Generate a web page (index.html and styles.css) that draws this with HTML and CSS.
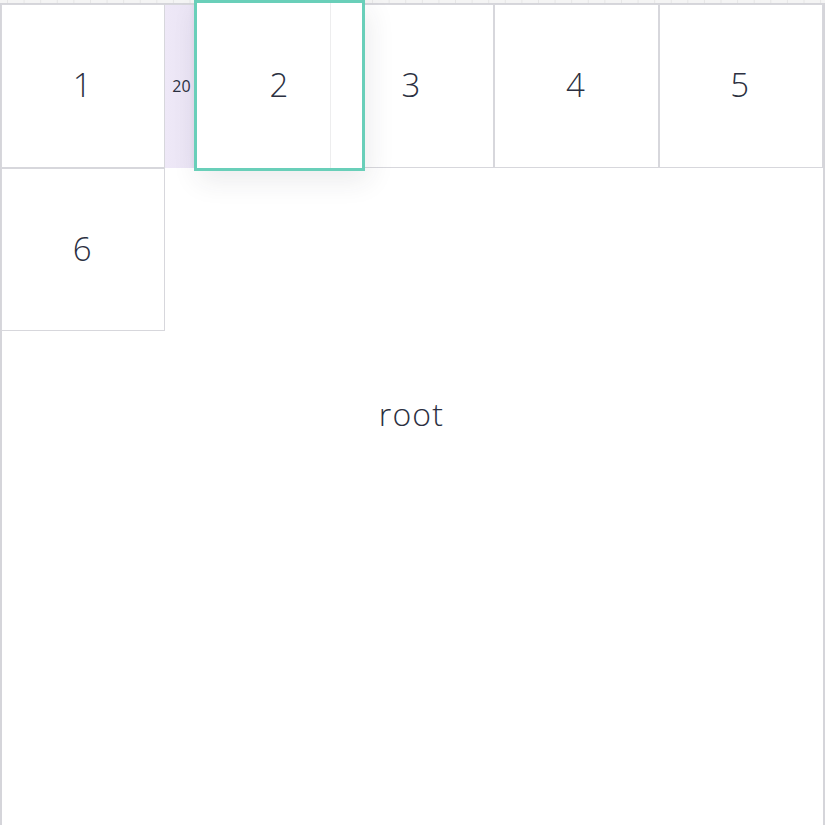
FILE: index.html
```html
<!DOCTYPE html>
<html lang="en">
<head>
<meta charset="utf-8">
<title>Flex layout</title>
<link rel="stylesheet" href="styles.css">
</head>
<body>
<div class="ruler"></div>
<div class="root">
  <div class="root-label">root</div>
  <div class="items">
    <div class="item"><span>1</span></div>
    <div class="item slot">
      <div class="gap"><span>20</span></div>
      <div class="slot-rest"></div>
      <div class="selected">
        <span>2</span>
        <i class="ghost-line"></i>
      </div>
    </div>
    <div class="item"><span>3</span></div>
    <div class="item"><span>4</span></div>
    <div class="item"><span>5</span></div>
    <div class="item"><span>6</span></div>
  </div>
</div>
</body>
</html>
```

FILE: styles.css
```css
html, body {
  margin: 0;
  padding: 0;
  background: #ffffff;
  overflow: hidden;
}

body {
  font-family: "Open Sans", "Liberation Sans", sans-serif;
  color: #2b3041;
}

.ruler {
  height: 3px;
  background-color: #f4f4f4;
  background-image: linear-gradient(to right, #e6e6e6 0 1px, transparent 1px);
  background-size: 16.6px 100%;
  background-position: 7px 0;
}

.root {
  display: grid;
  width: 821px;
  height: 830px;
  border: 1px solid #d5d5da;
  border-left-width: 2px;
  border-right-width: 2px;
}

.root-label {
  grid-area: 1 / 1;
  place-self: center;
  font-size: 32px;
  font-weight: 300;
  letter-spacing: 1.2px;
  margin-top: -12px;
  margin-left: -2px;
}

.items {
  grid-area: 1 / 1;
  display: flex;
  flex-wrap: wrap;
  align-content: flex-start;
  margin-left: -1px;
}

.item {
  box-sizing: border-box;
  width: 164.4px;
  height: 163.5px;
  border: 1px solid #d7d7dc;
  background: #ffffff;
  display: flex;
  align-items: center;
  justify-content: center;
  font-size: 33px;
  font-weight: 300;
}

.item span {
  margin-top: -2px;
  margin-left: -2px;
}

.slot {
  position: relative;
  justify-content: flex-start;
  align-items: stretch;
  border: none;
}

.gap {
  width: 30px;
  background: linear-gradient(to right, #eee8f7 0, #ebe5f5 80%, #e3dcee 100%);
  display: flex;
  align-items: center;
  justify-content: center;
  font-size: 16px;
  font-weight: 400;
  border-top: 1px solid #d7d7dc;
}

.gap span {
  margin-top: 0;
  margin-left: 2px;
}

.slot-rest {
  flex: 1;
}

.selected {
  position: absolute;
  left: 29px;
  top: -4px;
  box-sizing: border-box;
  width: 171px;
  height: 171px;
  border: 3px solid #69cfb9;
  background: #ffffff;
  box-shadow: 4px 10px 26px rgba(40, 40, 60, 0.09);
  display: flex;
  align-items: center;
  justify-content: center;
  z-index: 2;
}

.selected span {
  margin-top: -2px;
}

.ghost-line {
  position: absolute;
  left: 133px;
  top: 0;
  bottom: 0;
  width: 1px;
  background: #ededee;
}
```
